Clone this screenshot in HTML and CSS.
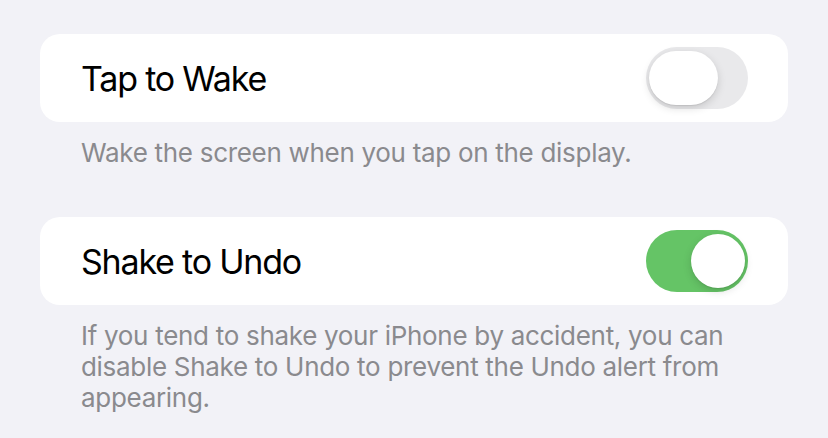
FILE: index.html
```html
<!DOCTYPE html>
<html>
    <head>
        <meta charset="utf-8">
        <title>Touch</title>
        <link rel="stylesheet" href="styles.css">
    </head>
    <body>
        <div class="settings">
            <div class="cell">
                <span class="cell_title">Tap to Wake</span>
                <div class="switch"><div class="knob knob_pressed"></div></div>
            </div>
            <div class="footnote">Wake the screen when you tap on the display.</div>

            <div class="cell">
                <span class="cell_title">Shake to Undo</span>
                <div class="switch switch_on"><div class="knob"></div></div>
            </div>
            <div class="footnote">If you tend to shake your iPhone by accident, you can disable Shake to Undo to prevent the Undo alert from appearing.</div>
        </div>
    </body>
</html>
```

FILE: styles.css
```css
html, body {
    margin:0;
    background:#f2f2f7;
}
body {
    font-family:Inter, "Noto Sans", "Liberation Sans", sans-serif;
    -webkit-font-smoothing:antialiased;
}
.settings {
    padding:34px 40px 0 40px;
}
.cell {
    height:88px;
    background:#fff;
    border-radius:20px;
    display:flex;
    align-items:center;
    justify-content:space-between;
    padding:0 40px 0 41px;
}
.cell_title {
    font-size:34px;
    color:#000;
    letter-spacing:-1.2px;
}
.footnote {
    padding:15px 41px 49px 41px;
    font-size:26px;
    line-height:31px;
    color:#8a8a8e;
    letter-spacing:-0.3px;
}
.footnote:last-child {
    padding-bottom:0;
}
.switch {
    width:102px;
    height:62px;
    box-sizing:border-box;
    padding:4px 3px;
    border-radius:31px;
    background:#e9e9eb;
    display:flex;
    align-items:center;
}
.switch_on {
    background:#65c466;
    justify-content:flex-end;
}
.knob {
    width:54px;
    height:54px;
    border-radius:27px;
    background:#fff;
    box-shadow:0 3px 8px rgba(0,0,0,0.15), 0 1px 1px rgba(0,0,0,0.08);
}
.knob_pressed {
    width:69px;
}
```
